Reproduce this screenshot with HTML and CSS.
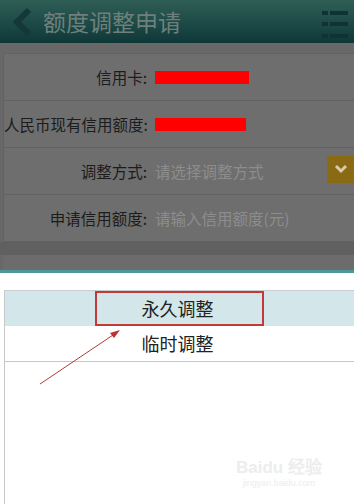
FILE: index.html
```html
<!DOCTYPE html>
<html lang="zh-CN">

<head>
    <meta charset="UTF-8" />
    <meta name="viewport" content="width=device-width, initial-scale=1.0" />
    <title>额度调整申请</title>
    <link rel="stylesheet" href="styles.css">
</head>

<body>
    <header class="topbar">
        <svg class="back" width="24" height="30" viewBox="0 0 24 30">
            <path d="M19 3 L7 15 L19 27" fill="none" stroke="#143838" stroke-width="6" stroke-linejoin="miter" />
        </svg>
        <h1>额度调整申请</h1>
        <svg class="menu" width="28" height="32" viewBox="0 0 28 32">
            <rect x="0" y="4" width="6" height="4" fill="#0f3232" />
            <rect x="8" y="4" width="18" height="4" fill="#0f3232" />
            <rect x="0" y="15" width="6" height="4" fill="#0f3232" />
            <rect x="8" y="15" width="18" height="4" fill="#0f3232" />
            <rect x="0" y="27" width="6" height="4" fill="#0f3232" />
            <rect x="8" y="27" width="18" height="4" fill="#0f3232" />
        </svg>
    </header>

    <div class="dim">
        <div class="form">
            <div class="row">
                <span class="label">信用卡:</span>
                <span class="mask mask-card"></span>
            </div>
            <div class="row">
                <span class="label">人民币现有信用额度:</span>
                <span class="mask mask-limit"></span>
            </div>
            <div class="row">
                <span class="label">调整方式:</span>
                <span class="hint">请选择调整方式</span>
                <span class="drop">
                    <svg width="14" height="10" viewBox="0 0 14 10">
                        <path d="M2 2 L7 7 L12 2" fill="none" stroke="#d8cbb0" stroke-width="3" />
                    </svg>
                </span>
            </div>
            <div class="row">
                <span class="label">申请信用额度:</span>
                <span class="hint">请输入信用额度(元)</span>
            </div>
        </div>
        <div class="strip"></div>
        <div class="form-next"></div>
    </div>
    <div class="teal-line"></div>

    <div class="sheet">
        <ul class="options">
            <li class="active">永久调整</li>
            <li>临时调整</li>
        </ul>

        <!-- 标注 -->
        <div class="mark"></div>
        <svg class="arrow" width="90" height="60" viewBox="0 0 90 60">
            <line x1="4" y1="57" x2="80" y2="6" stroke="#b03a3a" stroke-width="1" />
            <path d="M84 3 L74 6 L78 11 Z" fill="#c0302f" />
        </svg>

        <div class="watermark">
            <div class="wm-logo">Bai<span>du</span> 经验</div>
            <div class="wm-url">jingyan.baidu.com</div>
        </div>
    </div>
</body>

</html>
```

FILE: styles.css
```css
body {
    margin: 0;
    width: 354px;
    height: 504px;
    overflow: hidden;
    background-color: #fff;
    font-family: "Noto Sans CJK SC", "Noto Sans", sans-serif;
}

.topbar {
    height: 43px;
    display: flex;
    align-items: center;
    padding: 0 4px 0 10px;
    box-sizing: border-box;
    background: linear-gradient(#2f5e56, #0e3838);
}

.topbar h1 {
    margin: 0 0 0 9px;
    font-size: 23px;
    font-weight: normal;
    color: #6f807c;
    flex: 1;
    line-height: 1;
}

.back {
    display: block;
}

.menu {
    display: block;
    margin-top: 2px;
}

.dim {
    background-color: #686868;
    padding-top: 10px;
}

.form {
    margin-left: 3px;
    background-color: #6e6e6e;
    border: 1px solid #626262;
    border-right: none;
}

.row {
    height: 46px;
    display: flex;
    align-items: center;
    border-bottom: 1px solid #626262;
    font-size: 15.5px;
}

.row:last-child {
    border-bottom: none;
}

.label {
    width: 143px;
    text-align: right;
    color: #1c1c1c;
    flex-shrink: 0;
    white-space: nowrap;
}

.hint {
    margin-left: 8px;
    color: #8d8d8d;
}

.mask {
    margin-left: 8px;
    height: 13px;
    background-color: #ff0000;
}

.mask-card {
    width: 94px;
}

.mask-limit {
    width: 91px;
}

.drop {
    margin-left: auto;
    width: 27px;
    height: 27px;
    background-color: #8a6a12;
    display: flex;
    align-items: center;
    justify-content: center;
    margin-top: -4px;
}

.strip {
    height: 13px;
    background-color: #606060;
}

.form-next {
    height: 15px;
    margin-left: 3px;
    background-color: #6c6c6c;
}

.teal-line {
    height: 3px;
    background-color: #4c9898;
}

.sheet {
    position: relative;
    height: 231px;
    padding-top: 17px;
    box-sizing: border-box;
}

.options {
    list-style: none;
    margin: 0 0 0 4px;
    padding: 0;
    height: 214px;
    border-top: 1px solid #c9cfd0;
    border-left: 1px solid #c8c8c8;
}

.options li {
    height: 35px;
    line-height: 35px;
    text-align: center;
    font-size: 18px;
    color: #222;
    padding-right: 4px;
    border-bottom: 1px solid #c8c8c8;
}

.options li.active {
    background-color: #d3e7ea;
    border-bottom: none;
}

.mark {
    position: absolute;
    left: 95px;
    top: 18px;
    width: 165px;
    height: 31px;
    border: 2px solid #c2393b;
}

.arrow {
    position: absolute;
    left: 36px;
    top: 54px;
}

.watermark {
    position: absolute;
    left: 236px;
    top: 180px;
    color: #ededed;
    text-align: center;
}

.wm-logo {
    font-family: "Liberation Sans", sans-serif;
    font-size: 17px;
    font-weight: bold;
}

.wm-url {
    font-family: "Liberation Sans", sans-serif;
    font-size: 9px;
}
```
